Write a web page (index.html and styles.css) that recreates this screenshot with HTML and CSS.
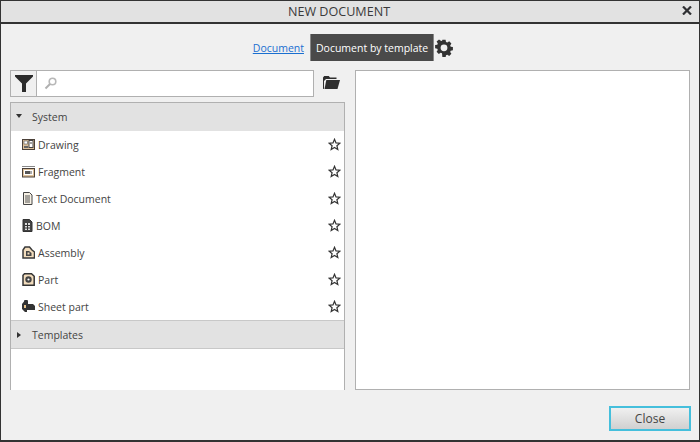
FILE: index.html
```html
<!DOCTYPE html>
<html lang="en">
<head>
<meta charset="utf-8">
<title>New document</title>
<link rel="stylesheet" href="styles.css">
</head>
<body>
<svg class="defs" width="0" height="0"><defs><symbol id="star" viewBox="0 0 13 13"><path d="M6.500 1.300 8 4.900l3.900.3-3 2.500.9 3.800-3.300-2-3.300 2 .9-3.800-3-2.500L5 4.900z" fill="#fff" stroke="#333" stroke-width="1.200"/></symbol></defs></svg>
<div class="window">
  <header class="titlebar">
    <span class="title">NEW DOCUMENT</span>
    <svg class="close-x" width="10" height="9" viewBox="0 0 10 9"><path d="M1 .5 9 8.500M9 .5 1 8.500" stroke="#2f3033" stroke-width="2.200" fill="none"/></svg>
  </header>
  <nav class="tabs">
    <a class="tab-link" href="#">Document</a>
    <span class="tab-active">Document by template</span>
    <svg class="gear" width="18" height="18" viewBox="0 0 18 18"><path fill="#333" fill-rule="evenodd" d="M7.400 1h3.200l.4 2.200 1.300.6 1.900-1.300 2.200 2.300-1.200 1.800.5 1.300 2.200.4v3.200l-2.200.4-.5 1.300 1.200 1.800-2.200 2.200-1.900-1.200-1.300.5-.4 2.200H7.400L7 14.500l-1.300-.5-1.900 1.200-2.200-2.200 1.200-1.800-.5-1.300-2.200-.4V6.300l2.200-.4.5-1.300-1.200-1.800L4 .7l1.800 1.300L7 2.300zM9 5.600a3.400 3.400 0 1 0 0 6.800 3.400 3.400 0 0 0 0-6.800z" transform="translate(0 -.2)"/></svg>
  </nav>
  <main class="content">
    <section class="left">
      <div class="search-row">
        <div class="search">
          <span class="filter">
            <svg width="18" height="17" viewBox="0 0 18 17"><path fill="#2b2b2b" d="M0 0h18v1.500L11 8.500V17H7V8.500L0 1.500z"/></svg>
          </span>
          <span class="field">
            <svg width="13" height="13" viewBox="0 0 13 13"><circle cx="8.500" cy="4.500" r="3.300" fill="none" stroke="#b8b8b8" stroke-width="1.600"/><path d="M6 7 1.500 11.500" stroke="#b0b0b0" stroke-width="2"/></svg>
          </span>
        </div>
        <svg class="folder" width="17" height="13" viewBox="0 0 17 13"><path fill="#2f2f2f" d="M0 1.500 1.200 0h4.600L7 1.500h6.500V3H3L1 5v8H.5L0 12.500z"/><path fill="#2f2f2f" d="M3.300 4H17l-2.500 9H1.500z"/></svg>
      </div>
      <div class="list">
        <div class="group"><span class="tri tri-down"></span>System</div>
        <div class="item"><svg class="ico" width="13" height="11" viewBox="0 0 13 11"><rect x=".5" y=".5" width="12" height="10" fill="#dcc09a" stroke="#4a4038"/><rect x="2" y="2" width="3.500" height="3" fill="#fff" stroke="#555" stroke-width=".6"/><rect x="7" y="1.500" width="4" height="7" fill="#fff" stroke="#444"/><path d="M8 4h2" stroke="#444"/><path d="M2 7h4v2H2z" fill="#666"/></svg><span>Drawing</span><svg class="star" width="13" height="13"><use href="#star"/></svg></div>
        <div class="item"><svg class="ico" width="13" height="12" viewBox="0 0 13 12"><path d="M0 .5h13" stroke="#888"/><rect x=".5" y="2.500" width="12" height="8.500" fill="#dcc09a" stroke="#4a4038"/><rect x="2" y="4" width="9" height="5" fill="#fff"/><rect x="3" y="5" width="5" height="3" fill="#555"/><path d="M9 5v3" stroke="#555"/></svg><span>Fragment</span><svg class="star" width="13" height="13"><use href="#star"/></svg></div>
        <div class="item"><svg class="ico" width="11" height="13" viewBox="0 0 11 13"><path d="M1.500.5h6l2.500 2.500v9.500H1.500z" fill="#f6f0e4" stroke="#444"/><path d="M3 4h5M3 6h5M3 8h5M3 10h5" stroke="#555"/></svg><span>Text Document</span><svg class="star" width="13" height="13"><use href="#star"/></svg></div>
        <div class="item"><svg class="ico" width="11" height="13" viewBox="0 0 11 13"><path d="M1 .5h6.500L10 3v9.500H1z" fill="#444" stroke="#333"/><rect x="3" y="4" width="5" height="7" fill="#ddd"/><path d="M5.500 4v7M3 6.500h5M3 9h5" stroke="#333"/></svg><span>BOM</span><svg class="star" width="13" height="13"><use href="#star"/></svg></div>
        <div class="item"><svg class="ico" width="13" height="13" viewBox="0 0 13 13"><path d="M3 1h4.500L10 4l2.500 2v6H1V4z" fill="#f2dcbc" stroke="#3a3a3a" stroke-width="1.500"/><path d="M4 5h3l2.500 2v3H4z" fill="#444"/><rect x="5.500" y="6.500" width="2" height="2" fill="#f2dcbc"/></svg><span>Assembly</span><svg class="star" width="13" height="13"><use href="#star"/></svg></div>
        <div class="item"><svg class="ico" width="13" height="13" viewBox="0 0 13 13"><path d="M2.500 .8h7l2.700 2.500v8.900H1V2.300z" fill="#f2dcbc" stroke="#333" stroke-width="1.500"/><circle cx="6.500" cy="6.500" r="3.200" fill="#444"/><circle cx="6.500" cy="6.500" r="1.100" fill="#fff"/></svg><span>Part</span><svg class="star" width="13" height="13"><use href="#star"/></svg></div>
        <div class="item"><svg class="ico" width="13" height="13" viewBox="0 0 13 13"><path d="M2 1.500a2 2 0 0 1 4 0V4h5l2 2v4H5v2H3L0 9V4z" fill="#333"/><rect x="2" y="5" width="2" height="3" fill="#e8c48c"/></svg><span>Sheet part</span><svg class="star" width="13" height="13"><use href="#star"/></svg></div>
        <div class="group group-last"><span class="tri tri-right"></span>Templates</div>
      </div>
    </section>
    <section class="preview"></section>
  </main>
  <footer class="footer">
    <button class="close-btn" type="button">Close</button>
  </footer>
</div>
</body>
</html>
```
FILE: styles.css
```css
* { box-sizing: border-box; }
html, body { margin: 0; padding: 0; }
body { width: 700px; height: 442px; overflow: hidden; font-family: "Open Sans", "Liberation Sans", sans-serif; font-size: 10.5px; color: #333; }
.defs { display: block; height: 0; }
.window { width: 700px; height: 442px; display: flex; flex-direction: column; background: #f0f0f0; border: 1px solid #333; border-bottom-width: 2px; }
.titlebar { height: 23px; flex: none; display: flex; align-items: center; justify-content: center; position: relative; padding-right: 22px; background: #e2e2e2; border-bottom: 2px solid #333; }
.title { font-size: 12.6px; color: #3a3a3a; }
.close-x { position: absolute; right: 7px; top: 5px; }
.tabs { height: 46px; flex: none; display: flex; align-items: flex-start; justify-content: center; padding: 10px 0 0 0; margin-left: 6px; }
.tab-link { margin-top: 7px; margin-right: 6px; color: #1a6fd0; text-decoration: underline; }
.tab-active { height: 27px; padding: 0 5px; display: flex; align-items: center; background: #4a4a4a; color: #fff; border-left: 1px solid #888; border-right: 1px solid #888; }
.gear { margin: 5px 0 0 1px; }
.content { flex: 1; display: flex; gap: 10px; padding: 0 9px; }
.left { width: 335px; height: 320px; display: flex; flex-direction: column; gap: 5px; }
.search-row { height: 27px; flex: none; display: flex; align-items: center; }
.search { width: 304px; height: 27px; display: flex; border: 1px solid #b0b0b0; background: #fff; }
.filter { width: 26px; flex: none; background: #f0f0f0; border-right: 1px solid #b0b0b0; display: flex; align-items: center; justify-content: center; }
.field { flex: 1; display: flex; align-items: center; padding-left: 7px; }
.folder { margin: 0 0 2px 9px; }
.list { flex: 1; background: #fff; border: 1px solid #b0b0b0; border-bottom: none; }
.group { height: 28px; display: flex; align-items: center; background: #e2e2e2; color: #444; padding-left: 5px; }
.group-last { height: 29px; padding-top: 1px; border-top: 1px solid #c8c8c8; border-bottom: 1px solid #c8c8c8; }
.tri { width: 0; height: 0; flex: none; }
.tri-down { border-left: 3px solid transparent; border-right: 3px solid transparent; border-top: 4px solid #333; margin-bottom: 3px; margin-right: 10px; }
.tri-right { border-top: 3px solid transparent; border-bottom: 3px solid transparent; border-left: 4px solid #333; margin-left: 1px; margin-right: 11px; }
.item { height: 27px; display: flex; align-items: center; padding: 0 3px 0 11px; gap: 3px; color: #444; }
.item span { flex: 1; }
.star { flex: none; }
.ico { flex: none; }
.preview { width: 335px; height: 320px; background: #fff; border: 1px solid #b0b0b0; }
.footer { flex: 1; display: flex; justify-content: flex-end; align-items: flex-start; padding: 16px 8px 0 0; }
.close-btn { width: 82px; height: 25px; padding: 0; border: 2px solid #45bfdc; background: linear-gradient(#f0f0f0, #d0d0d0); font: inherit; font-size: 12px; color: #444; }
```
